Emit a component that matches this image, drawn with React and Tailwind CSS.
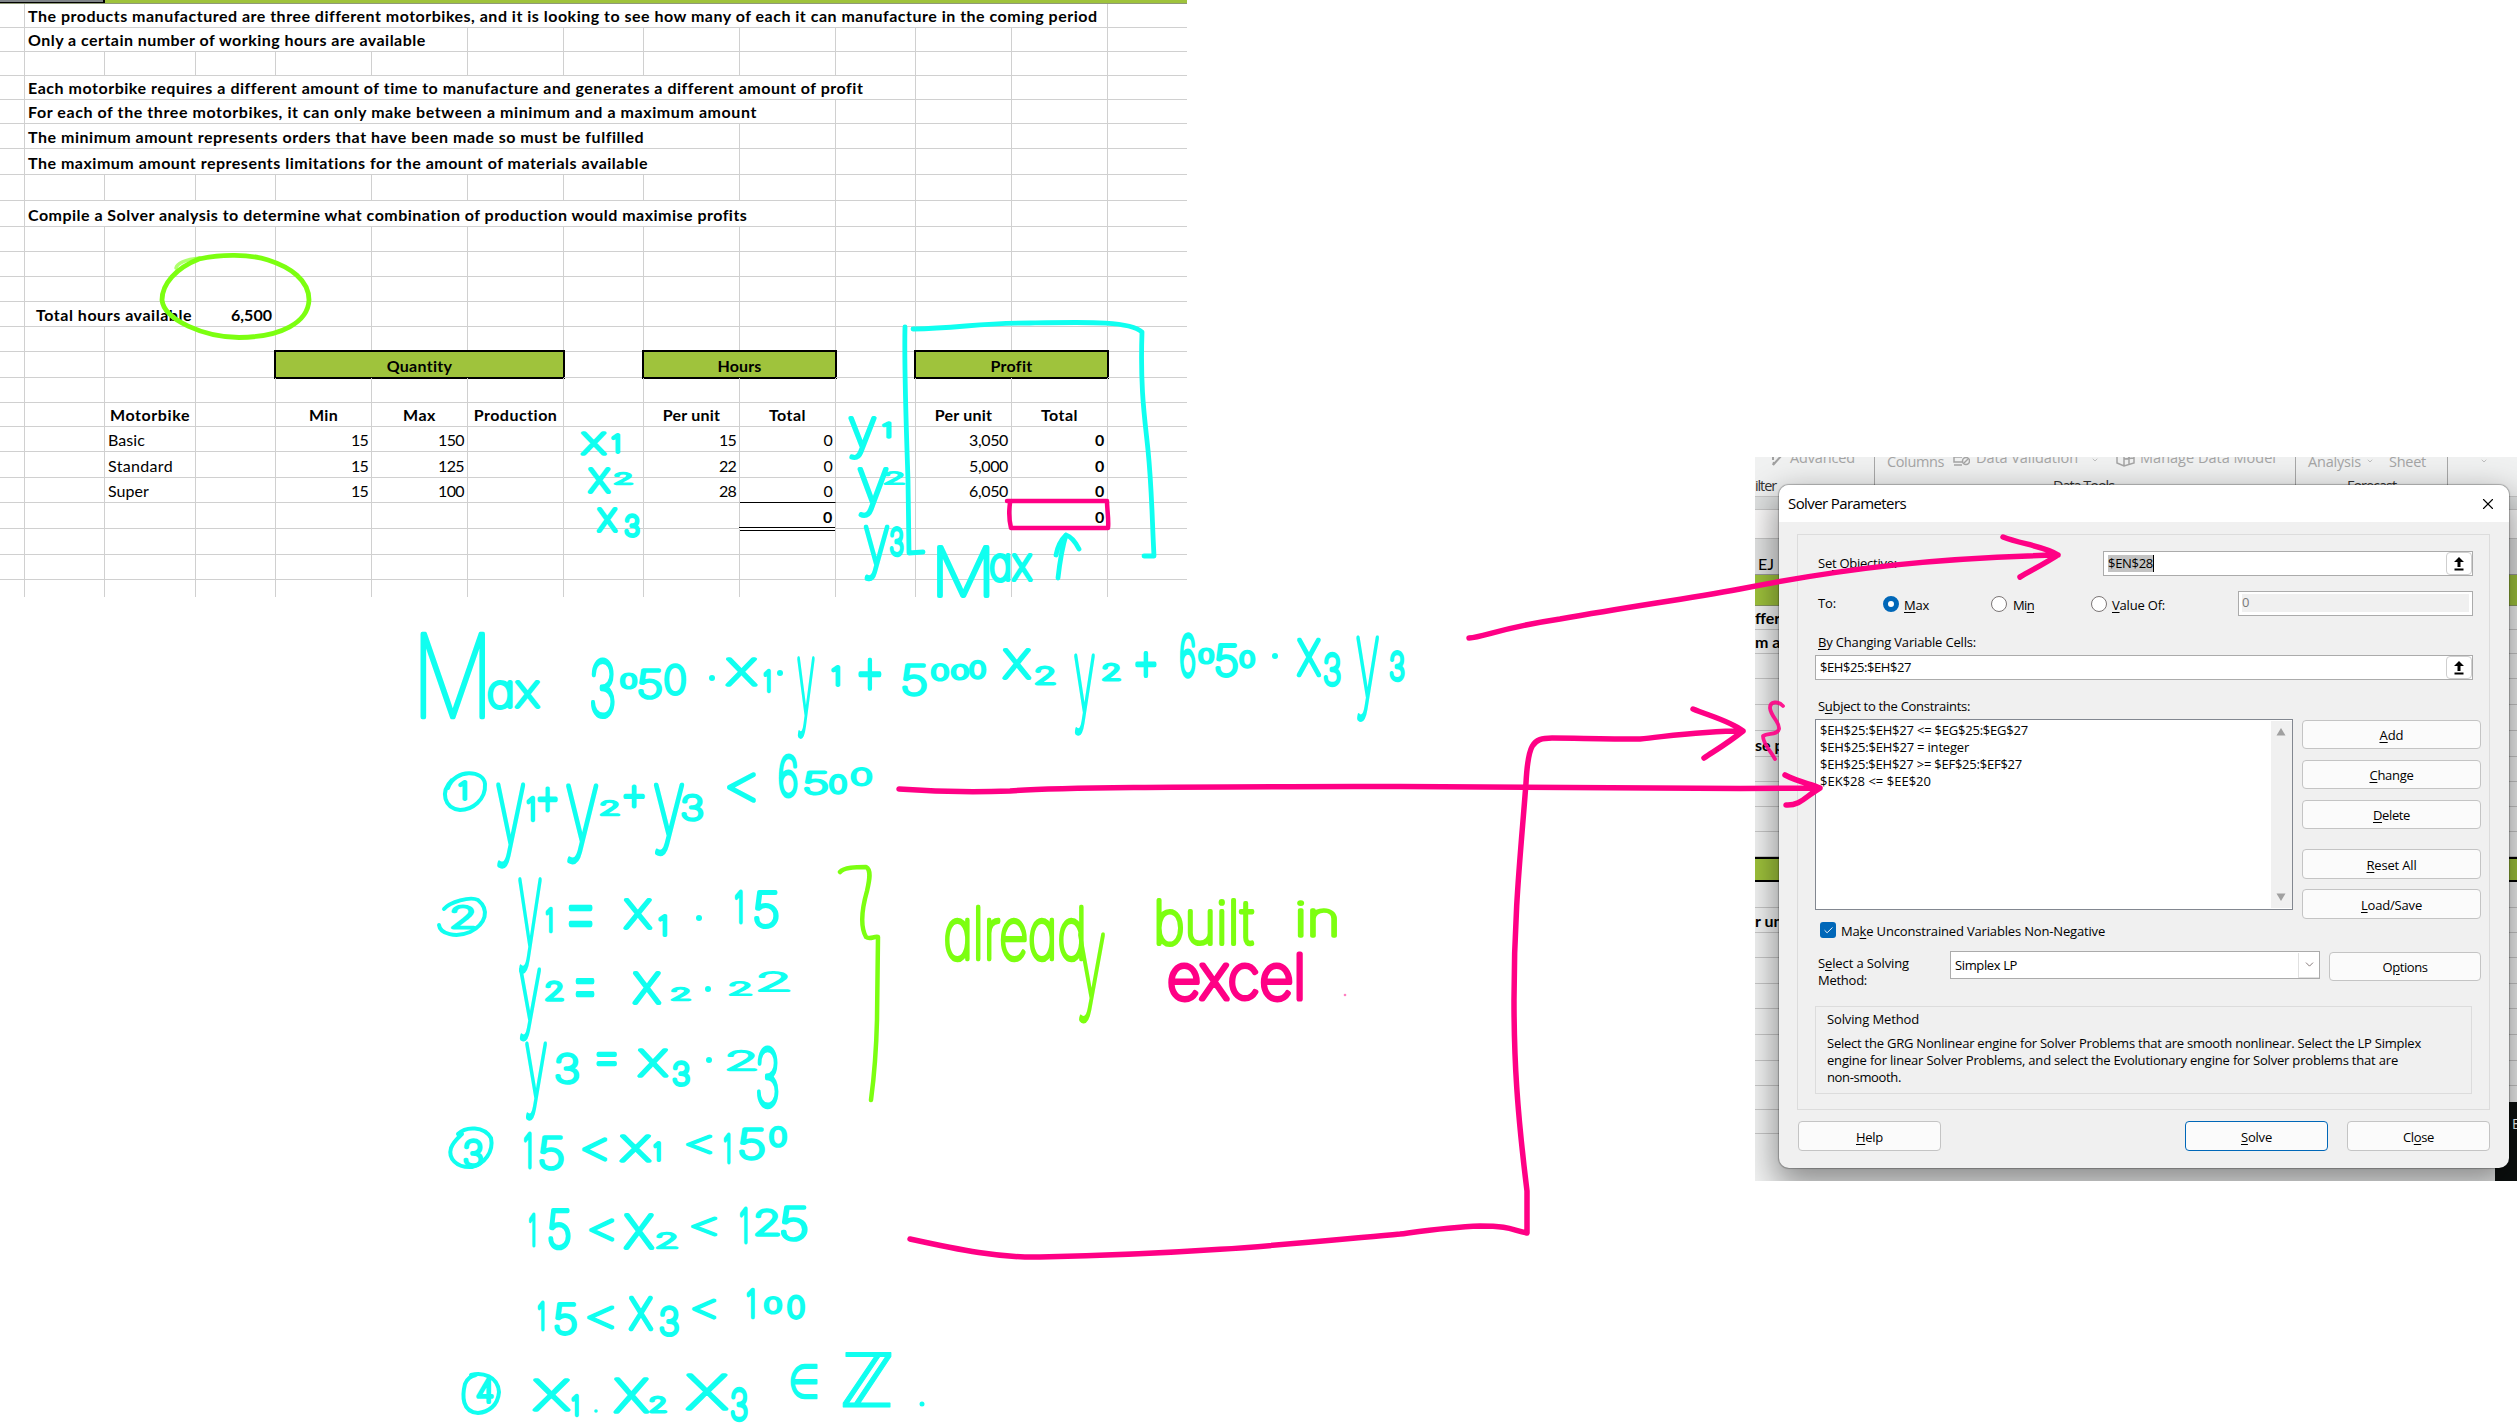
import React from "react";
import { ChevronDown, X, Check } from "lucide-react";

/* ---------- text measuring ---------- */
const ctx = document.createElement("canvas").getContext("2d");

// Text that takes up exactly `w` pixels by way of its letter spacing.
function Fit({ w, font, className = "", children, u = -1 }) {
  const text = children;
  ctx.font = font;
  const spacing = (w - ctx.measureText(text).width) / text.length;
  return (
    <span className={"whitespace-pre " + className} style={{ letterSpacing: spacing + "px" }}>
      {u < 0 ? (
        text
      ) : (
        <>
          {text.slice(0, u)}
          <span className="underline underline-offset-2">{text[u]}</span>
          {text.slice(u + 1)}
        </>
      )}
    </span>
  );
}

/* ---------- spreadsheet ---------- */
const COLS = ["w-[25px]", "w-[80px]", "w-[91px]", "w-[80px]", "w-[96px]", "w-[96px]", "w-[96px]", "w-[80px]", "w-[96px]", "w-[96px]", "w-[80px]", "w-[96px]", "w-[96px]", "w-[79px]"];
const SPANS = {
  "1-12": "w-[1083px]",
  "1-5": "w-[443px]",
  "1-9": "w-[811px]",
  "1-10": "w-[891px]",
  "1-8": "w-[715px]",
  "1-2": "w-[171px]",
  "4-6": "w-[288px]",
  "8-9": "w-[192px]",
  "11-12": "w-[192px]",
};
const b = (t, w, a = "c") => ({ t, w, a, bold: true });
const n = (t, w, a = "r") => ({ t, w, a });
const head = (to, t, w) => ({ to, t, w, a: "c", bold: true, head: true });

const ROWS = [
  ["h-[24px]", { 1: { to: 12, ...b("The products manufactured are three different motorbikes, and it is looking to see how many of each it can manufacture in the coming period", 1070, "l") } }],
  ["h-[24px]", { 1: { to: 5, ...b("Only a certain number of working hours are available", 399, "l") } }],
  ["h-[24px]", {}],
  ["h-[24px]", { 1: { to: 10, ...b("Each motorbike requires a different amount of time to manufacture and generates a different amount of profit", 835, "l") } }],
  ["h-[24px]", { 1: { to: 9, ...b("For each of the three motorbikes, it can only make between a minimum and a maximum amount", 730, "l") } }],
  ["h-[25px]", { 1: { to: 8, ...b("The minimum amount represents orders that have been made so must be fulfilled", 616, "l") } }],
  ["h-[26px]", { 1: { to: 8, ...b("The maximum amount represents limitations for the amount of materials available", 621, "l") } }],
  ["h-[26px]", {}],
  ["h-[26px]", { 1: { to: 9, ...b("Compile a Solver analysis to determine what combination of production would maximise profits", 721, "l") } }],
  ["h-[25px]", {}],
  ["h-[25px]", {}],
  ["h-[25px]", {}],
  ["h-[25px]", { 1: { to: 2, ...b("Total hours available", 156, "r") }, 3: b("6,500", 41, "r") }],
  ["h-[25px]", {}],
  ["h-[26px]", { 4: head(6, "Quantity", 66), 8: head(9, "Hours", 44), 11: head(12, "Profit", 42) }],
  ["h-[25px]", {}],
  ["h-[24px]", { 2: b("Motorbike", 80), 4: b("Min", 29), 5: b("Max", 33), 6: b("Production", 84), 8: b("Per unit", 58), 9: b("Total", 37), 11: b("Per unit", 58), 12: b("Total", 37) }],
  ["h-[25px]", { 2: n("Basic", 37, "l"), 4: n("15", 17), 5: n("150", 26), 8: n("15", 17), 9: n("0", 8.5), 11: n("3,050", 39), 12: b("0", 9, "r") }],
  ["h-[26px]", { 2: n("Standard", 65, "l"), 4: n("15", 17), 5: n("125", 26), 8: n("22", 17), 9: n("0", 8.5), 11: n("5,000", 39), 12: b("0", 9, "r") }],
  ["h-[25px]", { 2: n("Super", 41, "l"), 4: n("15", 17), 5: n("100", 26), 8: n("28", 17), 9: { ...n("0", 8.5), under: true }, 11: n("6,050", 39), 12: b("0", 9, "r") }],
  ["h-[26px]", { 9: { ...b("0", 9, "r"), total: true }, 12: b("0", 9, "r") }],
  ["h-[26px]", {}],
  ["h-[25px]", {}],
  ["h-[17px]", {}, true],
];

function Cell({ width, c, last, edge }) {
  const align = c?.a === "r" ? "justify-end pr-[3px]" : c?.a === "c" ? "justify-center" : "pl-[3px]";
  const bottom = last ? "" : c?.under ? "border-b border-b-black" : "border-b border-b-[#d0d0d0]";
  return (
    <div className={`${width} relative flex shrink-0 items-end ${align} ${edge ? "" : "border-r border-r-[#d0d0d0]"} ${bottom}`}>
      {c?.head && <div className="absolute -left-[2px] -top-[2px] -bottom-[2px] -right-[2px] border-2 border-black bg-[#9fc33c]" />}
      {c?.total && <div className="absolute -left-px right-0 -bottom-[3px] h-[4px] border-y border-black bg-white" />}
      {c && (
        <Fit w={c.w} font={(c.bold ? "bold" : "400") + " 16px Lato"} className={"relative -mb-px leading-[25px] " + (c.bold ? "font-bold" : "")}>
          {c.t}
        </Fit>
      )}
    </div>
  );
}

function Sheet() {
  return (
    <div className="flex w-[1187px] shrink-0 flex-col font-[Lato,sans-serif] text-[16px] text-black">
      <div className="flex h-1 border-b border-[#8f9a78]">
        <div className="w-[105px] border-b border-r-2 border-black bg-[#7f8488]" />
        <div className="flex-1 bg-[#9fc33c]" />
      </div>
      {ROWS.map(([h, cells, last], r) => {
        const out = [];
        for (let i = 0; i < COLS.length; i++) {
          const c = cells[i];
          out.push(<Cell key={i} width={c?.to ? SPANS[i + "-" + c.to] : COLS[i]} c={c} last={last} edge={i === COLS.length - 1} />);
          if (c?.to) i = c.to;
        }
        return <div key={r} className={"flex " + h}>{out}</div>;
      })}
    </div>
  );
}

/* ---------- solver dialog ---------- */
const UI = "13px 'Open Sans'";
const L = ({ w, u, className = "", children }) => (
  <Fit w={w} u={u} font={UI} className={className}>{children}</Fit>
);

function Btn({ w, u, className = "", children }) {
  return (
    <button className={"flex items-center justify-center rounded-[4px] border bg-[#fbfbfb] pt-0.5 " + className}>
      <L w={w} u={u}>{children}</L>
    </button>
  );
}

const PickButton = () => (
  <span className="flex h-[23px] w-[26px] items-center justify-center rounded-[4px] border border-[#cfcfcf] bg-white">
    <svg width="10" height="14" viewBox="0 0 10 14">
      <path d="M5 0L10 5H6.5V10H3.500V5H0ZM0.500 11.500H9.500V13.500H0.500Z" fill="#000" />
    </svg>
  </span>
);

const Radio = ({ on }) => (
  <span className={"h-4 w-4 shrink-0 rounded-full bg-white " + (on ? "border-[5px] border-[#0067b8]" : "border border-[#7b7575] bg-[#f6f3f3]")} />
);

function Dialog() {
  return (
    <div className="absolute left-[24px] top-[28px] flex h-[683px] w-[730px] flex-col overflow-hidden rounded-[10px] bg-[#f0f0f0] text-[13px] leading-[17px] text-black shadow-[0_14px_34px_4px_rgba(0,0,0,0.42),0_0_1px_1px_rgba(0,0,0,0.25)]">
      <div className="flex h-[37px] shrink-0 items-center justify-between bg-white pl-[9px] pr-[12px] text-[15px]">
        <Fit w={118} font="15px 'Open Sans'">Solver Parameters</Fit>
        <X size={18} strokeWidth={1.5} />
      </div>
      <div className="ml-[18px] mt-[12px] flex h-[576px] w-[693px] flex-col border border-[#dcdcdc] pl-[17px]">
        <div className="mt-[16px] flex h-[25px] w-[658px] items-center justify-between">
          <L w={79} u={2} className="ml-[3px]">Set Objective:</L>
          <div className="flex h-[25px] w-[370px] items-center justify-between border border-[#ababab] bg-white pl-[4px]">
            <span className="flex h-[17px] items-center border-r border-black bg-[#c3c3c3]">
              <L w={45}>$EN$28</L>
            </span>
            <PickButton />
          </div>
        </div>
        <div className="mt-[15px] flex h-[25px] w-[658px] items-center">
          <L w={18} className="ml-[3px] w-[65px]">To:</L>
          <span className="flex w-[108px] items-center gap-[5px]">
            <Radio on /><L w={25} u={0} className="pt-1">Max</L>
          </span>
          <span className="flex w-[100px] items-center gap-[6px]">
            <Radio /><L w={21} u={2} className="pt-1">Min</L>
          </span>
          <span className="flex w-[147px] items-center gap-[5px]">
            <Radio /><L w={53} u={0} className="pt-1">Value Of:</L>
          </span>
          <div className="h-[25px] flex-1 border border-[#ababab] bg-white px-[3px] pt-[2px]">
            <div className="h-[18px] bg-[#f0f0f0] text-[#7a7a7a]">0</div>
          </div>
        </div>
        <div className="ml-[3px] mt-[18px] h-[21px]"><L w={158} u={0}>By Changing Variable Cells:</L></div>
        <div className="flex h-[25px] w-[658px] items-center justify-between border border-[#ababab] bg-white pl-[4px]">
          <L w={91}>$EH$25:$EH$27</L>
          <PickButton />
        </div>
        <div className="ml-[3px] mt-[18px] h-[21px]"><L w={152} u={1}>Subject to the Constraints:</L></div>
        <div className="flex gap-[9px]">
          <div className="flex h-[191px] w-[478px] justify-between border border-[#828790] bg-white pl-[4px]">
            <div className="flex flex-col pt-[2px]">
              <L w={208}>{"$EH$25:$EH$27 <= $EG$25:$EG$27"}</L>
              <L w={149}>$EH$25:$EH$27 = integer</L>
              <L w={202}>{"$EH$25:$EH$27 >= $EF$25:$EF$27"}</L>
              <L w={111}>{"$EK$28 <= $EE$20"}</L>
            </div>
            <div className="my-px flex w-[21px] flex-col items-center justify-between bg-[#f0f0f0] pb-[7px] pr-[2px] pt-[7px]">
              <svg width="10" height="8" viewBox="0 0 10 8"><path d="M5 0L9.500 7.500H0.500Z" fill="#a0a0a0" /></svg>
              <svg width="10" height="8" viewBox="0 0 10 8"><path d="M5 8L0.500 0.500H9.500Z" fill="#a0a0a0" /></svg>
            </div>
          </div>
          <div className="flex w-[179px] flex-col pt-px">
            <Btn w={24} u={0} className="h-[29px] border-[#c4c4c4]">Add</Btn>
            <Btn w={44} u={0} className="mt-[11px] h-[29px] border-[#c4c4c4]">Change</Btn>
            <Btn w={37} u={0} className="mt-[11px] h-[29px] border-[#c4c4c4]">Delete</Btn>
            <Btn w={50} u={0} className="mt-[20px] h-[30px] border-[#c4c4c4]">Reset All</Btn>
            <Btn w={61} u={0} className="mt-[10px] h-[30px] border-[#c4c4c4]">Load/Save</Btn>
          </div>
        </div>
        <div className="ml-[5px] mt-[3px] flex h-[16px] items-center gap-[5px]">
          <span className="flex h-4 w-4 items-center justify-center rounded-[3px] bg-[#0067b8] text-white"><Check size={11} /></span>
          <L w={264} u={2} className="pt-0.5">Make Unconstrained Variables Non-Negative</L>
        </div>
        <div className="mt-[13px] flex h-[30px]">
          <div className="ml-[3px] flex w-[132px] flex-col pt-[4px]">
            <L w={91} u={1}>Select a Solving</L>
            <L w={49}>Method:</L>
          </div>
          <div className="flex h-[28px] w-[370px] items-center justify-between border border-[#ababab] bg-white pl-[4px]">
            <L w={62}>Simplex LP</L>
            <span className="flex h-[25px] w-[21px] items-center justify-center border-b border-l border-[#e0e0e0]">
              <ChevronDown size={13} strokeWidth={1.5} className="text-[#6b5c5c]" />
            </span>
          </div>
          <Btn w={45} u={1} className="ml-[9px] mt-px h-[29px] w-[152px] border-[#c4c4c4]">Options</Btn>
        </div>
        <div className="mt-[25px] flex h-[88px] w-[657px] flex-col border border-[#dcdcdc] pl-[11px] pt-[4px]">
          <L w={92}>Solving Method</L>
          <L w={594} className="mt-[7px]">Select the GRG Nonlinear engine for Solver Problems that are smooth nonlinear. Select the LP Simplex</L>
          <L w={571}>engine for linear Solver Problems, and select the Evolutionary engine for Solver problems that are</L>
          <L w={74}>non-smooth.</L>
        </div>
      </div>
      <div className="ml-[19px] mt-[11px] flex h-[30px] w-[692px]">
        <Btn w={27} u={0} className="w-[143px] border-[#c4c4c4]">Help</Btn>
        <Btn w={31} u={0} className="ml-auto w-[143px] border-[#0067b8]">Solve</Btn>
        <Btn w={31} u={2} className="ml-[19px] w-[143px] border-[#c4c4c4]">Close</Btn>
      </div>
    </div>
  );
}

const BACK_ROWS = [
  ["h-[24px]", "fferent"], ["h-[24px]", "m a"], ["h-[25px]"], ["h-[26px]"], ["h-[26px]"], ["h-[26px]", "se p"], ["h-[25px]"], ["h-[25px]"], ["h-[25px]"], ["h-[25px]"],
  ["h-[25px]", null, true], ["h-[26px]"], ["h-[25px]", "r unit"], ["h-[25px]"], ["h-[26px]"], ["h-[25px]"], ["h-[26px]"], ["h-[26px]"], ["h-[25px]"], ["h-[24px]"], ["h-[24px]"],
];
const BOTTOM_COLS = ["w-[58px]", "w-[96px]", "w-[80px]", "w-[96px]", "w-[96px]", "w-[80px]", "w-[80px]", "w-[80px]"];
const Ribbon = ({ w, className = "", children }) => (
  <Fit w={w} font="14.5px 'Open Sans'" className={className}>{children}</Fit>
);

function Screen() {
  return (
    <div className="relative mt-[457px] h-[724px] w-[762px] overflow-hidden bg-[#f3f4f4] font-['Open_Sans',sans-serif]">
      {/* ribbon */}
      <div className="flex h-[40px] border-b border-[#c8c8c8] bg-[#f0f1f1] text-[14.5px] leading-[20px] text-[#a5a5a5]">
        <div className="flex w-[120px] flex-col border-r border-[#a8a8a8]">
          <div className="-mt-[9px] flex h-[28px] gap-[6px] pl-[16px]">
            <svg width="13" height="20" viewBox="0 0 13 20" fill="none" stroke="#a0a0a0" strokeWidth="2"><path d="M2 17L11 7M2 8V12M2 17L3 14" /></svg>
            <Ribbon w={65}>Advanced</Ribbon>
          </div>
          <Ribbon w={21} className="text-[#333]">ilter</Ribbon>
        </div>
        <div className="flex w-[421px] flex-col border-r border-[#a8a8a8]">
          <div className="-mt-[9px] flex h-[26px] items-start">
            <Ribbon w={57} className="ml-[12px] mt-[4px]">Columns</Ribbon>
            <svg className="ml-[9px] mt-[6px]" width="17" height="12" viewBox="0 0 17 12" fill="none" stroke="#a5a5a5" strokeWidth="1.500"><path d="M9 3H1V8H9M9 11H1" /><circle cx="13" cy="7" r="3.500" /><path d="M11 9L15 5" /></svg>
            <Ribbon w={102} className="ml-[6px]">Data Validation</Ribbon>
            <ChevronDown size={8} className="ml-[13px] mt-[8px]" />
            <svg className="ml-[17px] mt-[2px]" width="19" height="17" viewBox="0 0 19 17" fill="none" stroke="#a5a5a5" strokeWidth="1.500"><path d="M1 2V13L8 16L18 13V2M8 4V16M13 2V14M8 9L18 8" /></svg>
            <Ribbon w={136} className="ml-[5px]">Manage Data Model</Ribbon>
          </div>
          <Ribbon w={61} className="ml-[178px] mt-[3px] text-[#333]">Data Tools</Ribbon>
        </div>
        <div className="flex w-[152px] flex-col border-r border-[#a8a8a8]">
          <div className="-mt-[5px] flex h-[26px]">
            <Ribbon w={53} className="ml-[12px]">Analysis</Ribbon>
            <ChevronDown size={8} className="ml-[5px] mt-[5px]" />
            <Ribbon w={37} className="ml-[15px]">Sheet</Ribbon>
          </div>
          <Ribbon w={49} className="-mt-px ml-[51px] text-[#333]">Forecast</Ribbon>
        </div>
        <ChevronDown size={8} className="ml-[32px]" />
      </div>
      <div className="h-[13px] border-b border-[#c8c8c8] bg-[#dfe1e1]" />
      <div className="h-[29px] border-b border-[#c8c8c8] bg-[#fbfafa]" />
      <div className="flex h-[36px] items-center border-b border-[#9a9a9a] bg-[#e3e4e4] pl-[3px] pt-[14px] font-[Lato,sans-serif] text-[16px]">EJ</div>
      <div className="h-[31px] border-b border-[#8a9a60] bg-[#9fc33c]" />
      {BACK_ROWS.map(([h, t, green], i) => (
        <div key={i} className={`${h} flex items-end whitespace-nowrap ${green ? "border-y-2 border-black bg-[#9fc33c]" : "border-b border-[#c8c8c8]"} font-[Lato,sans-serif] text-[16px] font-bold leading-[22px]`}>{t}</div>
      ))}
      <div className="flex h-[24px]">
        {BOTTOM_COLS.map((w, i) => <div key={i} className={w + " border-r border-[#c0c0c0]"} />)}
      </div>
      <div className="absolute bottom-0 right-0 flex h-[79px] w-[22px] items-start overflow-hidden bg-[#0c100f] pl-[17px] pt-[11px] text-[14px] text-white">E</div>
      <Dialog />
    </div>
  );
}

/* ---------- ink annotations ---------- */
const CYAN = "#10fff0";
const LIME = "#7cff10";
const PINK = "#ff0085";
const INK_FONT = "Inter, 'DejaVu Sans', sans-serif";

// One stroke of writing, stretched to the box x0..x1, y0..y1.
function Ink({ t, box, color = CYAN, sw = 4 }) {
  ctx.font = `100 100px ${INK_FONT}`;
  const m = ctx.measureText(t);
  const [x0, x1, y0, y1] = box;
  const p = sw / 2;
  const gw = m.actualBoundingBoxLeft + m.actualBoundingBoxRight;
  const gh = m.actualBoundingBoxAscent + m.actualBoundingBoxDescent;
  const sx = (x1 - x0 - 2 * p) / gw;
  const sy = (y1 - y0 - 2 * p) / gh;
  const tx = x0 + p + m.actualBoundingBoxLeft * sx;
  const ty = y0 + p + m.actualBoundingBoxAscent * sy;
  return (
    <text className="[font-feature-settings:'cv11']" transform={`matrix(${sx} 0 0 ${sy} ${tx} ${ty})`} fontSize="100" fontWeight="100" fontFamily={INK_FONT} fill={color} stroke={color} strokeWidth={sw} strokeLinejoin="round" vectorEffect="non-scaling-stroke">
      {t}
    </text>
  );
}

const WRITING = [
  ["x", 580, 607, 431, 456], ["1", 611, 620, 433, 454], ["x", 587, 611, 467, 494], ["2", 614, 633, 471, 486], ["x", 596, 618, 507, 533], ["3", 624, 640, 513, 538],
  ["y", 848, 877, 416, 460], ["1", 882, 891, 421, 439], ["y", 857, 889, 467, 518], ["2", 884, 905, 470, 486], ["y", 863, 890, 525, 581], ["3", 889, 904, 526, 557],
  ["M", 937, 990, 545, 598], ["ax", 989, 1031, 553, 583],
  ["M", 420, 486, 632, 719], ["ax", 487, 538, 680, 710],
  ["3", 590, 615, 658, 719], ["0", 620, 637, 672, 690], ["5", 638, 662, 668, 700], ["0", 664, 686, 663, 696],
  ["x", 725, 758, 657, 687], ["1", 763, 771, 669, 693], ["y", 796, 816, 657, 739], ["1", 831, 840, 665, 687], ["+", 858, 882, 658, 691],
  ["5", 902, 927, 663, 697], ["0", 931, 949, 662, 682], ["0", 951, 969, 663, 681], ["0", 969, 986, 659, 680],
  ["x", 1002, 1032, 648, 680], ["2", 1035, 1056, 665, 686], ["y", 1073, 1096, 654, 736], ["2", 1102, 1121, 662, 682], ["+", 1135, 1157, 651, 678],
  ["6", 1179, 1196, 633, 679], ["0", 1198, 1214, 647, 665], ["5", 1215, 1238, 643, 678], ["0", 1239, 1255, 649, 669],
  ["x", 1296, 1322, 638, 677], ["3", 1323, 1341, 652, 687], ["y", 1355, 1380, 636, 722], ["3", 1389, 1405, 650, 682],
  ["1", 458, 467, 780, 801], ["y", 495, 526, 783, 869], ["1", 526, 535, 796, 822], ["+", 537, 558, 786, 812], ["y", 565, 599, 783, 864], ["2", 600, 620, 799, 817], ["+", 623, 645, 785, 809], ["y", 653, 685, 783, 856], ["3", 681, 703, 793, 822],
  ["<", 727, 756, 772, 803], ["6", 778, 798, 754, 799], ["5", 804, 828, 770, 796], ["0", 829, 847, 773, 795], ["0", 851, 872, 766, 787],
  ["2", 451, 476, 904, 930], ["y", 517, 543, 877, 973], ["1", 545, 553, 907, 933], ["=", 568, 593, 905, 927], ["x", 623, 653, 898, 930], ["1", 658, 667, 914, 937], ["1", 734, 743, 890, 924], ["5", 754, 779, 890, 929],
  ["y", 518, 542, 967, 1041], ["2", 545, 564, 980, 1002], ["=", 575, 595, 978, 997], ["x", 632, 662, 971, 1005], ["2", 671, 691, 986, 1002], ["2", 729, 752, 980, 997], ["2", 758, 790, 970, 993],
  ["y", 524, 548, 1042, 1121], ["3", 555, 579, 1052, 1085], ["=", 596, 617, 1051, 1066], ["x", 637, 669, 1048, 1078], ["3", 672, 690, 1060, 1087], ["2", 727, 757, 1049, 1072], ["3", 756, 779, 1046, 1109],
  ["3", 463, 483, 1138, 1168], ["1", 523, 532, 1132, 1169], ["5", 539, 564, 1135, 1171], ["<", 582, 607, 1137, 1162], ["x", 619, 652, 1134, 1163], ["1", 653, 661, 1141, 1162], ["<", 686, 712, 1134, 1155], ["1", 723, 731, 1133, 1164], ["5", 739, 765, 1127, 1161], ["0", 769, 787, 1125, 1148],
  ["1", 528, 536, 1213, 1247], ["5", 548, 571, 1209, 1251], ["<", 589, 614, 1218, 1242], ["x", 623, 655, 1213, 1250], ["2", 656, 678, 1231, 1250], ["<", 691, 717, 1216, 1237], ["1", 739, 748, 1207, 1244], ["2", 755, 780, 1208, 1237], ["5", 781, 808, 1205, 1242],
  ["1", 537, 545, 1301, 1331], ["5", 554, 577, 1302, 1336], ["<", 587, 614, 1305, 1330], ["x", 628, 654, 1296, 1331], ["3", 659, 679, 1305, 1337], ["<", 692, 716, 1298, 1320], ["1", 746, 755, 1288, 1319], ["0", 764, 782, 1295, 1315], ["0", 787, 805, 1294, 1320],
  ["4", 476, 494, 1377, 1404], ["x", 532, 571, 1378, 1412], ["1", 571, 579, 1394, 1417], ["x", 613, 650, 1377, 1414], ["2", 649, 667, 1395, 1414], ["x", 685, 729, 1373, 1411], ["3", 730, 748, 1387, 1422],
];
const DOTS = [[712, 678, 3], [780, 673, 3], [1275, 656, 3], [699, 918, 3], [708, 989, 3], [709, 1060, 3], [596, 1411, 1.8], [922, 1404, 2.5]];

function Annotations() {
  return (
    <svg className="pointer-events-none absolute inset-0" width="2517" height="1423" viewBox="0 0 2517 1423" fill="none" strokeLinecap="round" strokeLinejoin="round">
      {/* circled total hours */}
      <path d="M176 268C178 261 190 259 200 258" stroke={LIME} strokeWidth="3.500" opacity="0.600" />
      <path d="M199 259C220 254 250 254 268 260C290 267 309 280 309 300C308 322 282 337 239 337.500C204 337 164 320 162 300C162 284 176 268 199 259" stroke={LIME} strokeWidth="4.800" />

      {/* frame round the profit columns */}
      <g stroke={CYAN} strokeWidth="4.800">
        <path d="M905 327C904 367 906 420 908 480L909 553L923 552" />
        <path d="M913 329C960 328 980 323 1030 323C1090 322 1130 321 1142 332C1140 390 1145 420 1148 450C1152 490 1152 520 1154 556H1144" />
        <path d="M1058 578C1060 560 1062 548 1066 535M1056 555C1058 544 1063 538 1066 535C1072 537 1076 543 1079 549" />
      </g>
      <path d="M1007 501H1107C1107 510 1109 520 1108 528H1011C1009 520 1009 510 1010 503" stroke={PINK} strokeWidth="4.500" />

      {/* step numbers */}
      <g stroke={CYAN} strokeWidth="4">
        <path d="M448 788C455 768 484 770 485 784C486 800 472 810 460 810C444 808 440 792 452 780" />
        <path d="M444 909C450 902 470 896 478 900C490 910 486 924 470 932C456 938 440 934 439 925" />
        <path d="M458 1134C466 1126 484 1126 491 1138C494 1152 484 1164 472 1167C456 1168 448 1158 451 1148C453 1142 458 1138 462 1134" />
        <path d="M471 1375C482 1372 498 1376 499 1392C498 1406 488 1412 478 1413C462 1412 462 1396 465 1384C467 1379 470 1376 476 1375" />
      </g>

      {WRITING.map(([t, ...box], i) => <Ink key={i} t={t} box={box} />)}
      <Ink t="∈" box={[790, 817, 1364, 1399]} sw={1.5} />
      <Ink t="ℤ" box={[842, 892, 1351, 1407]} sw={1} />
      {DOTS.map(([x, y, r]) => <circle key={x + y} cx={x} cy={y} r={r} fill={CYAN} />)}

      {/* note on the second step */}
      <path d="M840 872C844 867 856 867 866 867C872 870 869 882 867 891C861 912 861 928 866 937C870 940 874 936 878 937L877 1020C876 1060 873 1085 871 1100" stroke={LIME} strokeWidth="4.500" />
      <Ink t="alread" box={[944, 1079, 905, 962]} color={LIME} />
      <Ink t="y" box={[1077, 1106, 932, 1023]} color={LIME} />
      <Ink t="built" box={[1156, 1255, 898, 947]} color={LIME} />
      <Ink t="in" box={[1297, 1337, 900, 938]} color={LIME} />
      <Ink t="excel" box={[1168, 1303, 952, 1003]} color={PINK} sw={5} />
      <circle cx="1345" cy="995" r="1.300" fill={PINK} opacity="0.500" />

      {/* arrows into the dialog */}
      <g stroke={PINK} strokeWidth="5.500">
        <path d="M1469 638C1484 637 1500 628 1560 619C1640 605 1680 600 1740 589C1850 567 1940 558 2058 555M2003 537C2020 544 2045 546 2058 555C2044 564 2032 570 2020 577" />
        <path d="M899 789C940 792 980 792 1010 791C1060 787 1200 787 1400 786.500C1500 788 1600 788 1740 788.500L1820 788M1785 775C1798 782 1812 784 1820 788C1806 796 1800 806 1786 805" />
        <path d="M910 1239C960 1250 1000 1258 1040 1257C1200 1254 1300 1243 1400 1234C1430 1230 1450 1227 1480 1226C1510 1226 1512 1230 1527 1233V1191C1517 1110 1514 1060 1514 1000C1514 910 1521 850 1526 783C1528 745 1532 738 1552 738C1575 738 1600 739 1640 739C1670 736 1700 731 1743 731M1693 709C1710 716 1730 721 1743 731C1728 743 1716 750 1704 758" />
      </g>
      <path d="M1783 706C1778 701 1770 701 1770 708C1771 717 1780 722 1779 729C1777 736 1768 732 1763 736C1763 744 1770 750 1775 759" stroke={PINK} strokeWidth="3.800" opacity="0.900" />
    </svg>
  );
}

export default function App() {
  return (
    <div className="relative flex h-[1423px] w-[2517px] items-start justify-between overflow-hidden bg-white">
      <Sheet />
      <Screen />
      <Annotations />
    </div>
  );
}
